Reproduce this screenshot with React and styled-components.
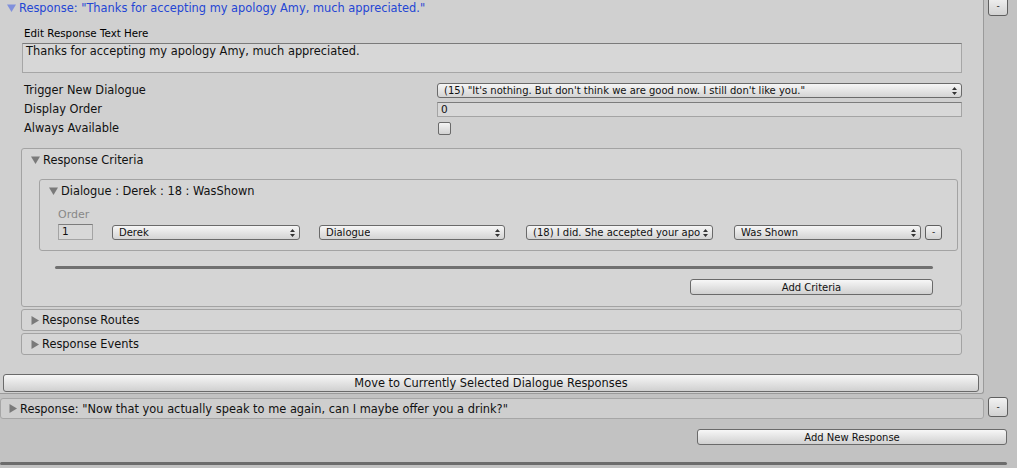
import React from 'react';
import styled, {createGlobalStyle} from "styled-components";

const GlobalStyle = createGlobalStyle`
    html, body {
        margin: 0;
        padding: 0;
        background: #c2c2c2;
    }
    body {
        font-family: "DejaVu Sans", Verdana, sans-serif;
        font-size: 11.4px;
        color: #111111;
    }
`;

const Page = styled.div`
    width: 1017px;
    height: 468px;
    overflow: hidden;
    background: #c2c2c2;
`;

const ResponseRow = styled.div`
    display: flex;
    align-items: flex-start;
    margin-top: ${p => p.$top || 0}px;
`;

const Panel = styled.div`
    width: 983px;
    flex-shrink: 0;
    background: #d0d0d0;
    border-right: 1px solid #9a9a9a;
    border-bottom: 1px solid #9a9a9a;
    border-bottom-right-radius: 3px;
    padding-bottom: 1px;
`;

const SideCol = styled.div`
    width: 33px;
    box-sizing: border-box;
    display: flex;
    padding-left: 4px;
    margin-top: ${p => p.$top || 0}px;
`;

const MiniButton = styled.div`
    width: ${p => p.$w || 20}px;
    height: ${p => p.$h || 20}px;
    box-sizing: border-box;
    border: 1px solid #5f5f5f;
    border-radius: 3px;
    background: linear-gradient(#f2f2f2, #d2d2d2);
    display: flex;
    align-items: center;
    justify-content: center;
    font-size: 9px;
    line-height: 1;
    flex-shrink: 0;
`;

const Header = styled.div`
    height: 15px;
    display: flex;
    align-items: center;
    padding-left: 7px;
    gap: 3px;
    color: #2446d4;
    white-space: nowrap;
`;

const Body = styled.div`
    padding: 0 21px;
    display: flex;
    flex-direction: column;
`;

const SmallLabel = styled.div`
    height: 12px;
    margin-top: 12px;
    padding-left: 3px;
    font-size: 10.3px;
    line-height: 12px;
    color: #000;
`;

const TextArea = styled.div`
    margin: 4px 0 0 1px;
    height: 30px;
    box-sizing: border-box;
    background: #d7d7d7;
    border: 1px solid #a6a6a6;
    border-top-color: #7a7a7a;
    padding: 1px 3px;
    line-height: 13px;
`;

const PropGrid = styled.div`
    display: grid;
    grid-template-columns: 416px 1fr;
    grid-auto-rows: 15px;
    row-gap: 4px;
    margin-top: 10px;
    align-items: center;
`;

const PropLabel = styled.div`
    padding-left: 3px;
    line-height: 15px;
`;

const Popup = styled.div`
    width: ${p => p.$w ? `${p.$w}px` : 'auto'};
    height: 15px;
    box-sizing: border-box;
    border: 1px solid #6a6a6a;
    border-radius: 3px;
    background: linear-gradient(#f6f6f6, #d4d4d4);
    display: flex;
    align-items: center;
    justify-content: space-between;
    padding: 0 4px 0 6px;
    font-size: 10px;
    white-space: nowrap;
    overflow: hidden;
    flex-shrink: 0;
`;

const PopupText = styled.span`
    overflow: hidden;
`;

const NumberField = styled.div`
    height: ${p => p.$h || 15}px;
    width: ${p => p.$w ? `${p.$w}px` : 'auto'};
    box-sizing: border-box;
    background: #d8d8d8;
    border: 1px solid #a4a4a4;
    border-top-color: #7c7c7c;
    padding-left: 3px;
    font-size: 10.5px;
    line-height: 13px;
`;

const Checkbox = styled.div`
    width: 13px;
    height: 13px;
    margin-left: 1px;
    box-sizing: border-box;
    border: 1px solid #6a6a6a;
    border-radius: 2px;
    background: linear-gradient(#f4f4f4, #d2d2d2);
`;

const Box = styled.div`
    box-sizing: border-box;
    border: 1px solid #a3a3a3;
    border-radius: 3px;
    background: #d5d5d5;
    margin-top: ${p => p.$top || 0}px;
    margin-left: ${p => p.$left || 0}px;
    margin-right: ${p => p.$right || 0}px;
    display: flex;
    flex-direction: column;
`;

const BoxHeader = styled.div`
    height: ${p => p.$h || 21}px;
    display: flex;
    align-items: center;
    gap: 3px;
    padding-left: ${p => p.$pad || 9}px;
    white-space: nowrap;
`;

const CriteriaRow = styled.div`
    display: flex;
    align-items: flex-end;
    padding-left: 18px;
    margin-top: 8px;
    padding-bottom: 10px;
`;

const OrderCol = styled.div`
    display: flex;
    flex-direction: column;
    gap: 3px;
    margin-right: 19px;
`;

const OrderLabel = styled.div`
    color: #888888;
    font-size: 11px;
    line-height: 12px;
`;

const Gap = styled.div`
    width: ${p => p.$w}px;
    flex-shrink: 0;
`;

const Separator = styled.div`
    margin: 15px 0 0 33px;
    width: 878px;
    height: 3px;
    border-radius: 2px;
    background: #707070;
`;

const Button = styled.div`
    height: ${p => p.$h || 16}px;
    width: ${p => p.$w ? `${p.$w}px` : 'auto'};
    box-sizing: border-box;
    border: 1px solid #6a6a6a;
    border-radius: 3px;
    background: linear-gradient(#f7f7f7, #d0d0d0);
    display: flex;
    align-items: center;
    justify-content: center;
    font-size: ${p => p.$fs || 10}px;
    white-space: nowrap;
    align-self: ${p => p.$self || 'auto'};
    margin: ${p => p.$m || 0};
    flex-shrink: 0;
`;

const CollapsedHeader = styled.div`
    width: 984px;
    flex-shrink: 0;
    height: 21px;
    box-sizing: border-box;
    border: 1px solid #a6a6a6;
    border-radius: 3px;
    background: #cecece;
    display: flex;
    align-items: center;
    gap: 3px;
    padding-left: 8px;
    white-space: nowrap;
`;

const Footer = styled.div`
    display: flex;
    flex-direction: column;
`;

const BottomBar = styled.div`
    margin-top: 17px;
    width: 1007px;
    height: 3px;
    border-radius: 2px;
    background: #6c6c6c;
`;

function Fold({open, color = "#7a7a7a"}) {
    return open ? (
        <svg width="9" height="8" viewBox="0 0 9 8">
            <path d="M0 0.5 L9 0.5 L4.5 8 Z" fill={color}/>
        </svg>
    ) : (
        <svg width="8" height="9" viewBox="0 0 8 9">
            <path d="M0.5 0 L8 4.5 L0.5 9 Z" fill={color}/>
        </svg>
    );
}

function Arrows() {
    return (
        <svg width="5" height="8" viewBox="0 0 5 8" style={{flexShrink: 0}}>
            <path d="M0 3 L5 3 L2.5 0 Z M0 5 L5 5 L2.5 8 Z" fill="#333"/>
        </svg>
    );
}

function PopupField({w, children}) {
    return (
        <Popup $w={w}>
            <PopupText>{children}</PopupText>
            <Arrows/>
        </Popup>
    );
}

export default function App() {
    return (
        <Page>
            <GlobalStyle/>
            <ResponseRow>
                <Panel>
                    <Header>
                        <Fold open color="#8090dc"/>
                        <span>Response: "Thanks for accepting my apology Amy, much appreciated."</span>
                    </Header>
                    <Body>
                        <SmallLabel>Edit Response Text Here</SmallLabel>
                        <TextArea>Thanks for accepting my apology Amy, much appreciated.</TextArea>
                        <PropGrid>
                            <PropLabel>Trigger New Dialogue</PropLabel>
                            <PopupField>(15) "It's nothing. But don't think we are good now. I still don't like you."</PopupField>
                            <PropLabel>Display Order</PropLabel>
                            <NumberField>0</NumberField>
                            <PropLabel>Always Available</PropLabel>
                            <Checkbox/>
                        </PropGrid>
                        <Box $top={12}>
                            <BoxHeader $h={21}>
                                <Fold open/>
                                <span>Response Criteria</span>
                            </BoxHeader>
                            <Box $top={9} $left={17} $right={3}>
                                <BoxHeader $h={21} $pad={9}>
                                    <Fold open/>
                                    <span>Dialogue : Derek : 18 : WasShown</span>
                                </BoxHeader>
                                <CriteriaRow>
                                    <OrderCol>
                                        <OrderLabel>Order</OrderLabel>
                                        <NumberField $w={35} $h={16}>1</NumberField>
                                    </OrderCol>
                                    <PopupField w={188}>Derek</PopupField>
                                    <Gap $w={19}/>
                                    <PopupField w={186}>Dialogue</PopupField>
                                    <Gap $w={21}/>
                                    <PopupField w={187}>(18) I did. She accepted your apo</PopupField>
                                    <Gap $w={21}/>
                                    <PopupField w={187}>Was Shown</PopupField>
                                    <Gap $w={4}/>
                                    <MiniButton $w={17} $h={15}>-</MiniButton>
                                </CriteriaRow>
                            </Box>
                            <Separator/>
                            <Button $w={243} $self="flex-end" $m="10px 28px 11px 0">Add Criteria</Button>
                        </Box>
                        <Box $top={2}>
                            <BoxHeader $h={20}>
                                <Fold/>
                                <span>Response Routes</span>
                            </BoxHeader>
                        </Box>
                        <Box $top={2}>
                            <BoxHeader $h={20}>
                                <Fold/>
                                <span>Response Events</span>
                            </BoxHeader>
                        </Box>
                    </Body>
                    <Button $h={18} $fs={11.4} $m="19px 4px 0 3px">Move to Currently Selected Dialogue Responses</Button>
                </Panel>
                <SideCol $top={-4}>
                    <MiniButton>-</MiniButton>
                </SideCol>
            </ResponseRow>
            <ResponseRow $top={4}>
                <CollapsedHeader>
                    <Fold/>
                    <span>Response: "Now that you actually speak to me again, can I maybe offer you a drink?"</span>
                </CollapsedHeader>
                <SideCol $top={-1}>
                    <MiniButton>-</MiniButton>
                </SideCol>
            </ResponseRow>
            <Footer>
                <Button $w={310} $m="10px 0 0 697px">Add New Response</Button>
                <BottomBar/>
            </Footer>
        </Page>
    );
}
